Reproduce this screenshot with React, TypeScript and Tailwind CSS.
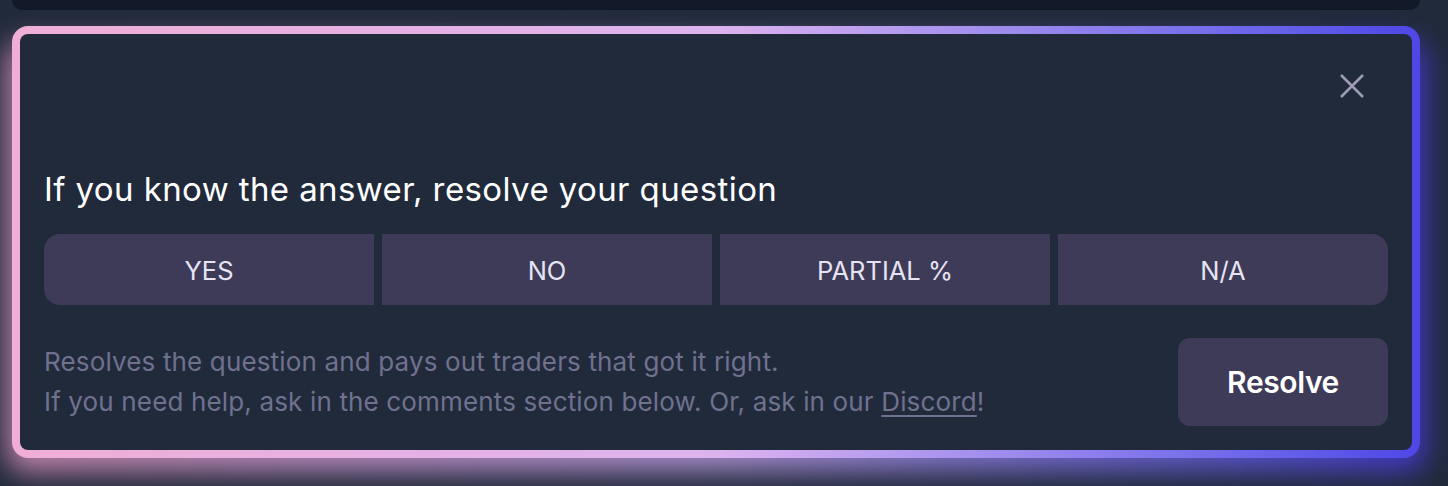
import React from "react";

export default function App() {
  const font = { fontFamily: "Inter, 'Noto Sans', sans-serif" };
  return (
    <div className="w-[1448px] h-[486px] overflow-hidden bg-[#212a3b]" style={font}>
      <div className="ml-[12px] w-[1408px] h-[10px] rounded-b-[10px] bg-[#111827]" />
      <div className="relative ml-[12px] mt-[16px] w-[1408px]">
        <div className="absolute left-[-6px] right-[-6px] top-[16px] bottom-[-14px] rounded-[20px] bg-gradient-to-r from-pink-300 via-purple-300 to-indigo-600 opacity-70 blur-[14px]" />
        <div className="relative rounded-[16px] bg-gradient-to-r from-[#f0aed6] via-[#ddb3ef] to-[#4f46e5] p-[8px]">
          <div className="rounded-[8px] bg-[#212a3b] px-6 pb-6">
            <div className="flex justify-end pt-10 pr-6">
              <svg width="24" height="24" viewBox="0 0 24 24" fill="none" stroke="#9d9bb8" strokeWidth="2.6" strokeLinecap="butt">
                <path d="M1 1L23 23M23 1L1 23" />
              </svg>
            </div>
            <h2 className="mt-[73px] text-[33px] leading-[36px] tracking-[0.4px] text-white font-normal">
              If you know the answer, resolve your question
            </h2>
            <div className="mt-[27px] grid grid-cols-4 gap-2">
              {["YES", "NO", "PARTIAL %", "N/A"].map((t, i) => (
                <button
                  key={t}
                  className={
                    "h-[71px] pt-[3px] bg-[#3d3b58] text-[25.5px] text-[#e6e4f4] " +
                    (i === 0 ? "rounded-l-[16px]" : "") +
                    (i === 3 ? "rounded-r-[16px]" : "")
                  }
                >
                  {t}
                </button>
              ))}
            </div>
            <div className="mt-[33px] flex items-center justify-between">
              <div className="text-[26px] leading-[40px] tracking-[0.15px] text-[#70718f]">
                <div>Resolves the question and pays out traders that got it right.</div>
                <div>
                  If you need help, ask in the comments section below. Or, ask in our{" "}
                  <span className="underline underline-offset-4">Discord</span>!
                </div>
              </div>
              <button className="w-[210px] h-[88px] rounded-[12px] bg-[#3d3b58] text-[30px] tracking-[-0.4px] font-semibold text-white">
                Resolve
              </button>
            </div>
          </div>
        </div>
      </div>
    </div>
  );
}
